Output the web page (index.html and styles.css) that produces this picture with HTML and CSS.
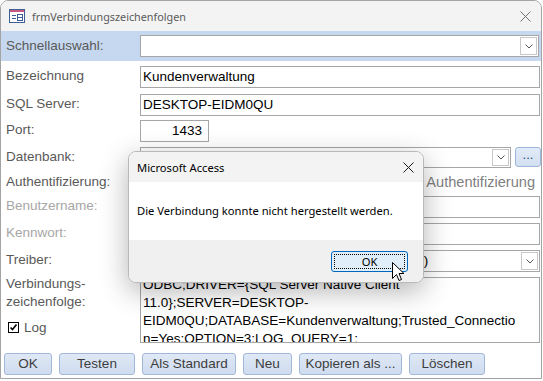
FILE: index.html
```html
<!DOCTYPE html>
<html lang="de">
<head>
    <meta charset="UTF-8">
    <title>frmVerbindungszeichenfolgen</title>
    <link rel="stylesheet" href="styles.css">
</head>
<body>

    <div class="window">
        <div class="titlebar">
            <svg class="form-icon" width="16" height="14" viewBox="0 0 16 14">
                <rect x="0.5" y="0.5" width="15" height="13" fill="#fff" stroke="#3d5f95"/>
                <rect x="1" y="1" width="14" height="2" fill="#c9577f"/>
                <line x1="3" y1="6.5" x2="7" y2="6.5" stroke="#3d5f95"/>
                <line x1="3" y1="9.5" x2="7" y2="9.5" stroke="#3d5f95"/>
                <rect x="8.5" y="5.5" width="5" height="6" fill="none" stroke="#3d5f95"/>
                <line x1="9" y1="8.5" x2="13" y2="8.5" stroke="#3d5f95"/>
            </svg>
            <span class="title">frmVerbindungszeichenfolgen</span>
            <svg class="close" width="11" height="11" viewBox="0 0 11 11">
                <path d="M0.5 0.5 L10.5 10.5 M10.5 0.5 L0.5 10.5" stroke="#707070" stroke-width="1"/>
            </svg>
        </div>

        <div class="band">
            <div class="label">Schnellauswahl:</div>
            <div class="field combo">
                <span class="drop"><svg width="8" height="5" viewBox="0 0 8 5"><path d="M0.5 0.5 L4 4 L7.5 0.5" fill="none" stroke="#555"/></svg></span>
            </div>
        </div>

        <div class="row row-bez">
            <div class="label">Bezeichnung</div>
            <div class="field">Kundenverwaltung</div>
        </div>
        <div class="row row-sql">
            <div class="label">SQL Server:</div>
            <div class="field">DESKTOP-EIDM0QU</div>
        </div>
        <div class="row row-port">
            <div class="label">Port:</div>
            <div class="field port">1433</div>
        </div>
        <div class="row row-db">
            <div class="label">Datenbank:</div>
            <div class="field combo">
                <span class="drop"><svg width="8" height="5" viewBox="0 0 8 5"><path d="M0.5 0.5 L4 4 L7.5 0.5" fill="none" stroke="#555"/></svg></span>
            </div>
            <div class="dots">...</div>
        </div>
        <div class="row row-auth">
            <div class="label">Authentifizierung:</div>
            <div class="auth-text">Authentifizierung</div>
        </div>
        <div class="row row-user">
            <div class="label disabled">Benutzername:</div>
            <div class="field"></div>
        </div>
        <div class="row">
            <div class="label disabled">Kennwort:</div>
            <div class="field"></div>
        </div>
        <div class="row">
            <div class="label">Treiber:</div>
            <div class="field combo"><span class="combo-text">SQL Server Native Client 11.0 (Version 2011.1)</span>
                <span class="drop"><svg width="8" height="5" viewBox="0 0 8 5"><path d="M0.5 0.5 L4 4 L7.5 0.5" fill="none" stroke="#555"/></svg></span>
            </div>
        </div>
        <div class="row row-conn">
            <div class="label-col">
                <div class="label multi">Verbindungs-<br>zeichenfolge:</div>
                <div class="log">
                    <svg width="11" height="11" viewBox="0 0 11 11">
                        <rect x="0.5" y="0.5" width="10" height="10" fill="#fff" stroke="#000"/>
                        <path d="M2.5 5.5 L4.5 7.5 L8.5 2.5" fill="none" stroke="#000" stroke-width="1.6"/>
                    </svg>
                    <span>Log</span>
                </div>
            </div>
            <div class="field memo"><div class="memo-text">ODBC;DRIVER={SQL Server Native Client
11.0};SERVER=DESKTOP-
EIDM0QU;DATABASE=Kundenverwaltung;Trusted_Connectio
n=Yes;OPTION=3;LOG_QUERY=1;</div></div>
        </div>

        <div class="buttons">
            <div class="btn w-ok">OK</div>
            <div class="btn w-test">Testen</div>
            <div class="btn w-std">Als Standard</div>
            <div class="btn w-neu">Neu</div>
            <div class="btn w-copy">Kopieren als ...</div>
            <div class="btn w-del">Löschen</div>
        </div>
    </div>

    <div class="dialog">
        <div class="dlg-title">
            <span>Microsoft Access</span>
            <svg width="11" height="11" viewBox="0 0 11 11">
                <path d="M0.5 0.5 L10.5 10.5 M10.5 0.5 L0.5 10.5" stroke="#1a1a1a" stroke-width="1"/>
            </svg>
        </div>
        <div class="dlg-body">Die Verbindung konnte nicht hergestellt werden.</div>
        <div class="dlg-foot">
            <div class="dlg-ok"><span>OK</span></div>
        </div>
    </div>

    <svg class="cursor" width="13" height="21" viewBox="0 0 13 21">
        <path d="M0.5 0.5 L0.5 16.5 L4.5 12.5 L7 18.5 L9.5 17.5 L7 11.5 L12 11.5 Z" fill="#fff" stroke="#000" stroke-width="1"/>
    </svg>

</body>
</html>
```

FILE: styles.css
```css
body {
    margin: 0;
    font-family: "Liberation Sans", Arial, sans-serif;
    font-size: 13.5px;
    background-color: #fff;
    width: 543px;
    height: 381px;
    overflow: hidden;
}
.window {
    width: 540px;
    height: 377px;
    border: 1px solid #a4a4a4;
    border-radius: 8px 8px 0 0;
    background-color: #fff;
    overflow: hidden;
}
.titlebar {
    height: 30px;
    background-color: #f3f3f3;
    display: flex;
    align-items: center;
    padding-left: 8px;
    font-family: "Noto Sans", sans-serif;
    font-size: 10.8px;
    color: #5a5a5a;
}
.form-icon {
    margin-right: 7px;
}
.title {
    flex: 1;
}
.close {
    margin-right: 10px;
}
.band {
    height: 30px;
    background-color: #c6d8ef;
    display: flex;
    align-items: center;
}
.label {
    width: 139px;
    padding-left: 5px;
    box-sizing: border-box;
    flex-shrink: 0;
    color: #595959;
    line-height: 20px;
    white-space: nowrap;
}
.label.disabled {
    color: #a6a6a6;
}
.field {
    flex: 1;
    height: 22px;
    margin-right: 1px;
    box-sizing: border-box;
    border: 1px solid #a6a6a6;
    background-color: #fff;
    color: #000;
    padding: 0 2px;
    line-height: 20px;
    position: relative;
    white-space: nowrap;
    overflow: hidden;
}
.band .field {
    margin-right: 2px;
}
.combo-text {
    padding-left: 4px;
    color: #000;
}
.combo .drop {
    position: absolute;
    right: 1px;
    top: 1px;
    bottom: 1px;
    width: 15px;
    border: 1px solid #c8c8c8;
    background-color: #fff;
    display: flex;
    align-items: center;
    justify-content: center;
}
.row {
    display: flex;
    height: 22px;
    margin-top: 5px;
}
.row-bez {
    margin-top: 5px;
}
.row-sql {
    margin-top: 6px;
}
.row-port {
    margin-top: 4px;
}
.field.port {
    flex: none;
    width: 69px;
    text-align: right;
    padding-right: 6px;
}
.row-db {
    height: 21px;
}
.row-db .field {
    height: 21px;
    margin-right: 4px;
}
.dots {
    width: 26px;
    height: 20px;
    box-sizing: border-box;
    border: 1px solid #9db7dc;
    border-radius: 3px;
    background: linear-gradient(#e2ebf7, #d2dff1);
    color: #2c4a78;
    text-align: center;
    line-height: 14px;
    font-size: 13px;
}
.row-auth {
    height: 28px;
    margin-top: 0;
    align-items: center;
}
.auth-text {
    flex: 1;
    text-align: right;
    padding-right: 6px;
    color: #7f7f7f;
    font-size: 14.6px;
}
.row-user {
    margin-top: 0;
}
.row-conn {
    height: 66px;
}
.label-col {
    width: 139px;
    flex-shrink: 0;
}
.label.multi {
    line-height: 18px;
    margin-top: -2px;
}
.log {
    display: flex;
    align-items: center;
    margin-top: 9px;
    padding-left: 7px;
    color: #595959;
}
.log span {
    margin-left: 5px;
}
.field.memo {
    height: 66px;
    white-space: pre;
    line-height: 18px;
}
.memo-text {
    margin-top: -2px;
}
.buttons {
    display: flex;
    gap: 7px;
    margin-top: 10px;
    padding-left: 3px;
}
.btn {
    height: 22px;
    box-sizing: border-box;
    border: 1px solid #a2b8d8;
    border-radius: 3px;
    background: linear-gradient(#dfe8f5, #cfdcef);
    color: #3d3d3d;
    text-align: center;
    line-height: 20px;
}
.w-ok { width: 48px; }
.w-test { width: 76px; }
.w-std { width: 94px; }
.w-neu { width: 49px; }
.w-copy { width: 103px; }
.w-del { width: 76px; }

.dialog {
    position: absolute;
    left: 128px;
    top: 151px;
    width: 296px;
    height: 132px;
    box-sizing: border-box;
    border: 1px solid #b9b9b9;
    border-radius: 8px;
    overflow: hidden;
    background-color: #fff;
    box-shadow: 0 8px 28px rgba(0, 0, 0, 0.3);
    font-family: "Noto Sans", sans-serif;
    font-size: 11.2px;
    color: #000;
    display: flex;
    flex-direction: column;
}
.dlg-title {
    height: 30px;
    background-color: #f3f3f3;
    display: flex;
    align-items: center;
    justify-content: space-between;
    padding: 0 9px 0 8px;
}
.dlg-body {
    height: 58px;
    padding-left: 8px;
    line-height: 58px;
}
.dlg-foot {
    flex: 1;
    background-color: #f0f0f0;
    display: flex;
    justify-content: flex-end;
    padding: 11px 15px 0 0;
}
.dlg-ok {
    width: 77px;
    height: 21px;
    box-sizing: border-box;
    border: 1px solid #0067c0;
    border-radius: 3px;
    background-color: #e0eef9;
    padding: 2px;
}
.dlg-ok span {
    display: block;
    height: 100%;
    box-sizing: border-box;
    border: 1px dotted #000;
    text-align: center;
    line-height: 13px;
}
.cursor {
    position: absolute;
    left: 392px;
    top: 262px;
}
```
